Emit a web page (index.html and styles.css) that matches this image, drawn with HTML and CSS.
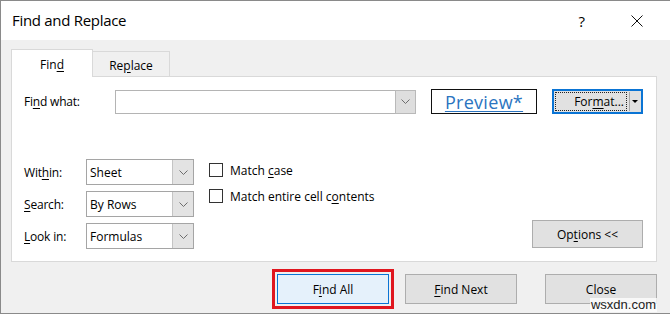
FILE: index.html
```html
<!DOCTYPE html>
<html lang="en">
<head>
  <meta charset="UTF-8">
  <title>Find and Replace</title>
  <link rel="stylesheet" href="styles.css">
</head>
<body>
  <div class="window">
    <div class="titlebar">
      <span class="title">Find and Replace</span>
      <div class="title-controls">
        <span class="help">?</span>
        <svg class="close-x" width="12" height="12" viewBox="0 0 12 12">
          <path d="M0.5 0.5L11.5 11.5M11.5 0.5L0.5 11.5" stroke="#111" stroke-width="1" fill="none"/>
        </svg>
      </div>
    </div>

    <div class="body">
      <div class="tabs">
        <div class="tab active">Fin<u>d</u></div>
        <div class="tab">Re<u>p</u>lace</div>
      </div>

      <div class="panel">
        <div class="find-row">
          <span class="label find-label">Fi<u>n</u>d what:</span>
          <div class="combo find-combo">
            <span class="combo-text"></span>
            <span class="combo-arrow">
              <svg width="9" height="5" viewBox="0 0 9 5"><path d="M0.5 0.5L4.5 4.5L8.5 0.5" stroke="#6d6d6d" fill="none"/></svg>
            </span>
          </div>
          <div class="preview"><span>Preview*</span></div>
          <div class="format-btn">
            <span class="format-main"><span class="focus-ring">For<u>m</u>at...</span></span>
            <span class="format-split"><span class="tri"></span></span>
          </div>
        </div>

        <div class="options-area">
          <div class="selects">
            <span class="label">Wit<u>h</u>in:</span>
            <div class="combo">
              <span class="combo-text">Sheet</span>
              <span class="combo-arrow">
                <svg width="9" height="5" viewBox="0 0 9 5"><path d="M0.5 0.5L4.5 4.5L8.5 0.5" stroke="#6d6d6d" fill="none"/></svg>
              </span>
            </div>
            <span class="label"><u>S</u>earch:</span>
            <div class="combo">
              <span class="combo-text">By Rows</span>
              <span class="combo-arrow">
                <svg width="9" height="5" viewBox="0 0 9 5"><path d="M0.5 0.5L4.5 4.5L8.5 0.5" stroke="#6d6d6d" fill="none"/></svg>
              </span>
            </div>
            <span class="label"><u>L</u>ook in:</span>
            <div class="combo">
              <span class="combo-text">Formulas</span>
              <span class="combo-arrow">
                <svg width="9" height="5" viewBox="0 0 9 5"><path d="M0.5 0.5L4.5 4.5L8.5 0.5" stroke="#6d6d6d" fill="none"/></svg>
              </span>
            </div>
          </div>

          <div class="checks">
            <div class="check"><span class="box"></span><span>Match <u>c</u>ase</span></div>
            <div class="check"><span class="box"></span><span>Match entire cell c<u>o</u>ntents</span></div>
          </div>

          <div class="options-wrap">
            <div class="btn options-btn">Op<u>t</u>ions &lt;&lt;</div>
          </div>
        </div>
      </div>

      <div class="actions">
        <div class="btn find-all">F<u>i</u>nd All</div>
        <div class="btn find-next"><u>F</u>ind Next</div>
        <div class="btn close-btn">Close</div>
      </div>
    </div>

    <span class="watermark">wsxdn.com</span>
  </div>
</body>
</html>
```

FILE: styles.css
```css
* {
  box-sizing: border-box;
  margin: 0;
  padding: 0;
}

body {
  font-family: 'Open Sans', 'Noto Sans', sans-serif;
  font-size: 12px;
  color: #000;
  background: #fff;
}

u {
  text-decoration: underline;
  text-underline-offset: 2px;
}

.window {
  position: relative;
  width: 670px;
  height: 314px;
  border: 1px solid #8a8a8a;
  border-right: none;
  background: #f0f0f0;
}

/* title bar */
.titlebar {
  height: 39px;
  background: #fff;
  display: flex;
  align-items: center;
  justify-content: space-between;
  padding-left: 11px;
}

.title {
  font-size: 15px;
  letter-spacing: -0.3px;
  padding-bottom: 1px;
}

.title-controls {
  display: flex;
  align-items: center;
  padding-right: 27px;
}

.help {
  font-size: 15px;
  margin-right: 46px;
}

.close-x {
  display: block;
  margin-top: 1px;
}

/* dialog body */
.body {
  padding: 9px 13px 0 10px;
}

.tabs {
  display: flex;
  align-items: flex-end;
  height: 27px;
}

.tab {
  height: 25px;
  width: 77px;
  border: 1px solid #d9d9d9;
  border-left: none;
  border-bottom: none;
  display: flex;
  align-items: center;
  justify-content: center;
  padding-top: 2px;
}

.tab.active {
  width: 82px;
  height: 28px;
  border-left: 1px solid #d9d9d9;
  background: #fff;
  margin-bottom: -1px;
  position: relative;
  z-index: 1;
  padding-top: 2px;
}

.panel {
  width: 646px;
  background: #fff;
  border: 1px solid #d9d9d9;
  padding: 12px 13px 12px 12px;
}

.label {
  letter-spacing: -0.2px;
}

.find-row {
  display: flex;
  align-items: center;
  height: 25px;
}

.find-label {
  width: 91px;
}

/* combo boxes */
.combo {
  display: flex;
  height: 26px;
  width: 108px;
  border: 1px solid #a5a5a5;
  background: #fff;
}

.combo-text {
  flex: 1;
  padding-left: 3px;
  display: flex;
  align-items: center;
}

.combo-arrow {
  width: 21px;
  background: #e3e3e3;
  border-left: 1px solid #c4c4c4;
  display: flex;
  align-items: center;
  justify-content: center;
}

.find-combo {
  width: 301px;
  height: 24px;
  border-color: #b4b4b4;
}

.find-combo .combo-arrow {
  border: 1px solid #b9b9b9;
  margin: -1px -1px -1px 0;
  background: #dedede;
}

.preview {
  margin-left: 15px;
  width: 106px;
  height: 25px;
  border: 1px solid #111;
  display: flex;
  align-items: center;
  justify-content: center;
  font-size: 18px;
  color: #2a74c0;
}

.preview span {
  text-decoration: underline;
  text-decoration-thickness: 1px;
  text-underline-offset: 2px;
  letter-spacing: 0.3px;
}

.format-btn {
  margin-left: 15px;
  width: 91px;
  height: 25px;
  border: 2px solid #0a74d4;
  background: #e1e1e1;
  display: flex;
  padding: 1px;
}

.format-main {
  flex: 1;
  display: flex;
}

.focus-ring {
  flex: 1;
  border: 1px dotted #222;
  display: flex;
  align-items: center;
  justify-content: flex-end;
  padding-right: 2px;
}

.format-split {
  width: 11px;
  border-left: 1px solid #a8a8a8;
  margin-left: 2px;
  display: flex;
  align-items: center;
  justify-content: center;
}

.tri {
  width: 0;
  height: 0;
  border-left: 3px solid transparent;
  border-right: 3px solid transparent;
  border-top: 3px solid #000;
}

/* lower options */
.options-area {
  display: flex;
  margin-top: 45px;
}

.selects {
  display: grid;
  grid-template-columns: 62px 108px;
  row-gap: 6px;
  align-items: center;
}

.checks {
  margin-left: 15px;
  padding-top: 4px;
  display: flex;
  flex-direction: column;
  gap: 12px;
}

.check {
  display: flex;
  align-items: center;
  height: 14px;
}

.box {
  width: 14px;
  height: 14px;
  border: 1px solid #333;
  background: #fff;
  margin-right: 7px;
}

.options-wrap {
  flex: 1;
  display: flex;
  justify-content: flex-end;
  align-items: flex-end;
  padding-bottom: 1px;
}

.btn {
  display: flex;
  align-items: center;
  justify-content: center;
  background: #e1e1e1;
  border: 1px solid #adadad;
}

.options-btn {
  width: 111px;
  height: 28px;
}

/* bottom buttons */
.actions {
  display: flex;
  justify-content: flex-end;
  margin-top: 12px;
}

.actions .btn {
  width: 112px;
  height: 30px;
}

.find-all {
  background: #e5f1fb;
  border-color: #0a74d4 !important;
  outline: 3px solid #e0161e;
  outline-offset: 2px;
  margin-right: 16px;
}

.find-next {
  margin-right: 28px;
}

.watermark {
  position: absolute;
  right: 13px;
  bottom: 1px;
  font-family: 'Liberation Sans', Arial, sans-serif;
  font-size: 13px;
  color: #222;
  background: rgba(255, 255, 255, 0.75);
  padding: 0 1px;
  line-height: 14px;
}
```
